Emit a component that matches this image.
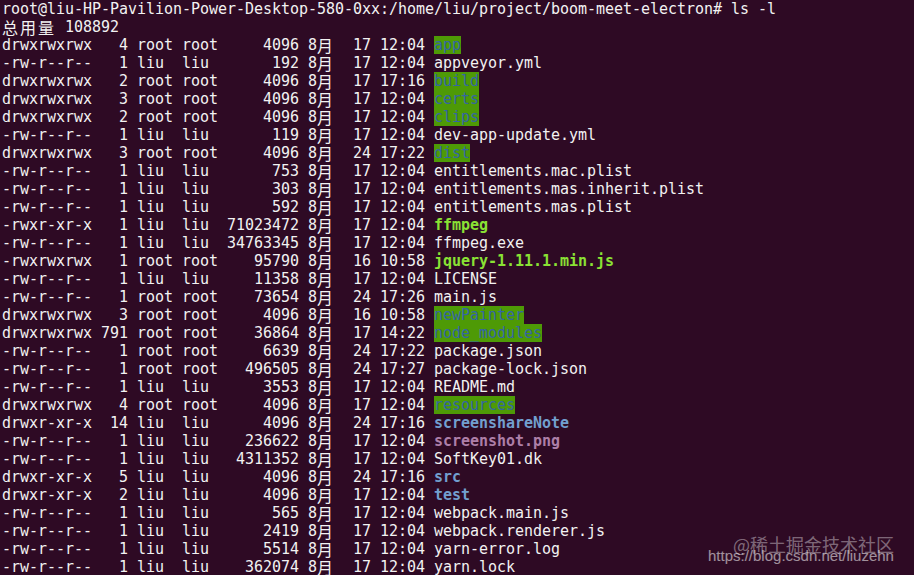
import React from "react";

// ls -l output, one entry per row
// kind: "ow" = other-writable dir, "dir", "exe", "img", or plain file
const rows = [
  ["drwxrwxrwx", "4", "root", "root", "4096", "17", "12:04", "app", "ow"],
  ["-rw-r--r--", "1", "liu", "liu", "192", "17", "12:04", "appveyor.yml"],
  ["drwxrwxrwx", "2", "root", "root", "4096", "17", "17:16", "build", "ow"],
  ["drwxrwxrwx", "3", "root", "root", "4096", "17", "12:04", "certs", "ow"],
  ["drwxrwxrwx", "2", "root", "root", "4096", "17", "12:04", "clips", "ow"],
  ["-rw-r--r--", "1", "liu", "liu", "119", "17", "12:04", "dev-app-update.yml"],
  ["drwxrwxrwx", "3", "root", "root", "4096", "24", "17:22", "dist", "ow"],
  ["-rw-r--r--", "1", "liu", "liu", "753", "17", "12:04", "entitlements.mac.plist"],
  ["-rw-r--r--", "1", "liu", "liu", "303", "17", "12:04", "entitlements.mas.inherit.plist"],
  ["-rw-r--r--", "1", "liu", "liu", "592", "17", "12:04", "entitlements.mas.plist"],
  ["-rwxr-xr-x", "1", "liu", "liu", "71023472", "17", "12:04", "ffmpeg", "exe"],
  ["-rw-r--r--", "1", "liu", "liu", "34763345", "17", "12:04", "ffmpeg.exe"],
  ["-rwxrwxrwx", "1", "root", "root", "95790", "16", "10:58", "jquery-1.11.1.min.js", "exe"],
  ["-rw-r--r--", "1", "liu", "liu", "11358", "17", "12:04", "LICENSE"],
  ["-rw-r--r--", "1", "root", "root", "73654", "24", "17:26", "main.js"],
  ["drwxrwxrwx", "3", "root", "root", "4096", "16", "10:58", "newPainter", "ow"],
  ["drwxrwxrwx", "791", "root", "root", "36864", "17", "14:22", "node_modules", "ow"],
  ["-rw-r--r--", "1", "root", "root", "6639", "24", "17:22", "package.json"],
  ["-rw-r--r--", "1", "root", "root", "496505", "24", "17:27", "package-lock.json"],
  ["-rw-r--r--", "1", "liu", "liu", "3553", "17", "12:04", "README.md"],
  ["drwxrwxrwx", "4", "root", "root", "4096", "17", "12:04", "resources", "ow"],
  ["drwxr-xr-x", "14", "liu", "liu", "4096", "24", "17:16", "screenshareNote", "dir"],
  ["-rw-r--r--", "1", "liu", "liu", "236622", "17", "12:04", "screenshot.png", "img"],
  ["-rw-r--r--", "1", "liu", "liu", "4311352", "17", "12:04", "SoftKey01.dk"],
  ["drwxr-xr-x", "5", "liu", "liu", "4096", "24", "17:16", "src", "dir"],
  ["drwxr-xr-x", "2", "liu", "liu", "4096", "17", "12:04", "test", "dir"],
  ["-rw-r--r--", "1", "liu", "liu", "565", "17", "12:04", "webpack.main.js"],
  ["-rw-r--r--", "1", "liu", "liu", "2419", "17", "12:04", "webpack.renderer.js"],
  ["-rw-r--r--", "1", "liu", "liu", "5514", "17", "12:04", "yarn-error.log"],
  ["-rw-r--r--", "1", "liu", "liu", "362074", "17", "12:04", "yarn.lock"],
];

const nameStyles = {
  ow: "bg-[#4e9a06] text-[#3465a4]",
  dir: "font-bold text-[#729fcf]",
  exe: "font-bold text-[#8ae234]",
  img: "font-bold text-[#ad7fa8]",
};

// CJK glyphs take two terminal cells
function Wide({ children }) {
  return (
    <span className="inline-block w-[18px] h-[18px] align-top text-[16px] leading-[18px] [font-family:'Noto_Sans_CJK_SC',sans-serif]">
      {children}
    </span>
  );
}

function Line({ children }) {
  return <div className="h-[18px] leading-[18px] whitespace-pre overflow-hidden">{children}</div>;
}

export default function App() {
  return (
    <div className="relative w-[914px] h-[575px] overflow-hidden bg-[#2e0a24] text-[#f2f2f2]">
      <div className="pl-[2px] text-[15px] tracking-[-0.03px] [font-family:'DejaVu_Sans_Mono',monospace]">
        <Line>root@liu-HP-Pavilion-Power-Desktop-580-0xx:/home/liu/project/boom-meet-electron# ls -l</Line>
        <Line>
          <Wide>总</Wide>
          <Wide>用</Wide>
          <Wide>量</Wide>
          {" 108892"}
        </Line>
        {rows.map(([perm, links, user, group, size, day, time, name, kind]) => (
          <Line key={name}>
            {`${perm} ${links.padStart(3)} ${user.padEnd(4)} ${group.padEnd(4)} ${size.padStart(8)} 8`}
            <Wide>月</Wide>
            {`  ${day} ${time} `}
            <span className={`inline-block h-[18px] align-top leading-[18px] ${nameStyles[kind] || ""}`}>{name}</span>
          </Line>
        ))}
      </div>

      {/* watermark */}
      <div className="absolute left-[733px] top-[533px] text-[18px] leading-[22px] text-white/40 [font-family:'Noto_Sans_CJK_SC',sans-serif]">
        @稀土掘金技术社区
      </div>
      <div className="absolute left-[708px] top-[547px] text-[15px] leading-[18px] text-white/55 [font-family:'Liberation_Sans',sans-serif]">
        https://blog.csdn.net/liuzehn
      </div>
    </div>
  );
}
